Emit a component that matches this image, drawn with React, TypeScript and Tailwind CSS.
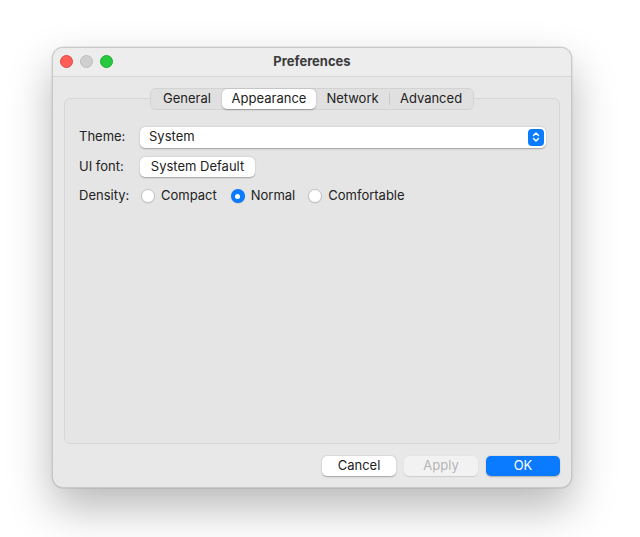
import React from "react";

const font = { fontFamily: "Inter, 'Noto Sans', 'Liberation Sans', sans-serif" };

function Radio({ checked }: { checked?: boolean }) {
  if (checked) {
    return (
      <span className="flex h-[14px] w-[14px] items-center justify-center rounded-full bg-[#0a7aff] shadow-[0_0.5px_1px_rgba(0,0,0,0.25)]">
        <span className="h-[5px] w-[5px] rounded-full bg-white" />
      </span>
    );
  }
  return (
    <span className="h-[14px] w-[14px] rounded-full border border-[#c4c4c4] bg-white shadow-[0_0.5px_1px_rgba(0,0,0,0.12)]" />
  );
}

export default function App() {
  return (
    <div className="h-[537px] w-[640px] bg-white pl-[52px] pt-[47px] text-[13px] text-[#222222]" style={font}>
      <div className="flex h-[441px] w-[520px] flex-col overflow-hidden rounded-[11px] border border-[#c9c9c9] bg-[#e8e8e8] shadow-[0_20px_44px_rgba(0,0,0,0.28),0_0_0_0.5px_rgba(0,0,0,0.12)]">
        {/* title bar */}
        <div className="relative flex h-[29px] shrink-0 items-center border-b border-[#d6d6d6] bg-[#ededed]">
          <div className="absolute left-[7px] top-[7px] flex gap-[7px]">
            <span className="h-[13px] w-[13px] rounded-full border border-[#e2463f] bg-[#ff5f57]" />
            <span className="h-[13px] w-[13px] rounded-full border border-[#bdbdbd] bg-[#cfcfcf]" />
            <span className="h-[13px] w-[13px] rounded-full border border-[#1fab30] bg-[#28c840]" />
          </div>
          <div className="w-full text-center text-[13px] font-bold text-[#3b3b3b]">Preferences</div>
        </div>

        {/* body */}
        <div className="flex flex-1 flex-col px-[11px] pt-[21px]">
          <div className="relative h-[346px] rounded-[6px] border border-[#d8d8d8] bg-[#e5e5e5]">
            {/* tabs */}
            <div className="absolute left-[85px] top-[-11px] flex h-[22px] items-center rounded-[6px] border border-[#d3d3d3] bg-[#e0e0e0] px-[1px]">
              <div className="flex h-[20px] w-[70px] items-center justify-center">General</div>
              <div className="flex h-[20px] w-[94px] items-center justify-center rounded-[5px] bg-white shadow-[0_0.5px_1.5px_rgba(0,0,0,0.3)]">Appearance</div>
              <div className="flex h-[20px] w-[73px] items-center justify-center">Network</div>
              <div className="h-[12px] w-px bg-[#c8c8c8]" />
              <div className="flex h-[20px] w-[82px] items-center justify-center">Advanced</div>
            </div>

            <div className="flex flex-col pl-[14px] pr-[13px] pt-[27px]">
              <div className="flex h-[22px] items-center">
                <span className="w-[61px]">Theme:</span>
                <div className="flex h-[21px] flex-1 items-center justify-between rounded-[5px] bg-white pl-[9px] pr-[2px] shadow-[0_0.5px_1.5px_rgba(0,0,0,0.3)]">
                  <span>System</span>
                  <span className="flex h-[17px] w-[16px] items-center justify-center rounded-[4px] bg-[#0a7aff]">
                    <svg width="8" height="12" viewBox="0 0 8 12" fill="none" stroke="white" strokeWidth="1.5" strokeLinecap="round" strokeLinejoin="round">
                      <path d="M1.5 4.5 L4 2 L6.5 4.5" />
                      <path d="M1.5 7.5 L4 10 L6.5 7.5" />
                    </svg>
                  </span>
                </div>
              </div>
              <div className="mt-[8px] flex h-[22px] items-center">
                <span className="w-[61px]">UI font:</span>
                <div className="flex h-[20px] w-[115px] items-center justify-center rounded-[5px] bg-white shadow-[0_0.5px_1.5px_rgba(0,0,0,0.3)]">
                  System Default
                </div>
              </div>
              <div className="mt-[7px] flex h-[22px] items-center">
                <span className="w-[62px]">Density:</span>
                <div className="flex items-center gap-[6px]">
                  <Radio />
                  <span>Compact</span>
                </div>
                <div className="ml-[14px] flex items-center gap-[6px]">
                  <Radio checked />
                  <span>Normal</span>
                </div>
                <div className="ml-[13px] flex items-center gap-[6px]">
                  <Radio />
                  <span>Comfortable</span>
                </div>
              </div>
            </div>
          </div>

          {/* buttons */}
          <div className="mt-[12px] flex justify-end gap-[8px]">
            <div className="flex h-[20px] w-[74px] items-center justify-center rounded-[5px] bg-white shadow-[0_0.5px_1.5px_rgba(0,0,0,0.3)]">Cancel</div>
            <div className="flex h-[20px] w-[74px] items-center justify-center rounded-[5px] bg-[#f2f2f2] text-[#b5b5b5] shadow-[0_0.5px_1px_rgba(0,0,0,0.12)]">Apply</div>
            <div className="flex h-[20px] w-[74px] items-center justify-center rounded-[5px] bg-[#0a7aff] text-white shadow-[0_0.5px_1.5px_rgba(0,0,0,0.25)]">OK</div>
          </div>
        </div>
      </div>
    </div>
  );
}
